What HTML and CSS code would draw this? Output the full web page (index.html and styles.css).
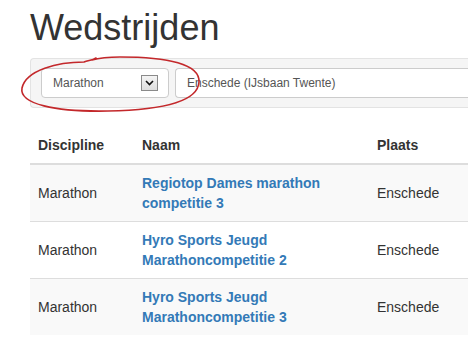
FILE: index.html
```html
<!DOCTYPE html>
<html lang="nl">
<head>
<meta charset="UTF-8" />
<meta name="viewport" content="width=device-width, initial-scale=1.0"/>
<title>Wedstrijden</title>
<link rel="stylesheet" href="styles.css">
</head>
<body>
<div class="page">
  <h1 class="title">Wedstrijden</h1>

  <div class="filters">
    <div class="select select-discipline">
      <span>Marathon</span>
      <span class="select-arrow">
        <svg width="9" height="6" viewBox="0 0 9 6"><path d="M1 1 L4.5 4.5 L8 1" fill="none" stroke="#111" stroke-width="1.6"/></svg>
      </span>
    </div>
    <div class="select select-plaats">
      <span>Enschede (IJsbaan Twente)</span>
    </div>
  </div>

  <table class="races">
    <thead>
      <tr>
        <th class="col-discipline">Discipline</th>
        <th class="col-naam">Naam</th>
        <th>Plaats</th>
      </tr>
    </thead>
    <tbody>
      <tr>
        <td>Marathon</td>
        <td><a href="#">Regiotop Dames marathon competitie 3</a></td>
        <td>Enschede</td>
      </tr>
      <tr>
        <td>Marathon</td>
        <td><a href="#">Hyro Sports Jeugd Marathoncompetitie 2</a></td>
        <td>Enschede</td>
      </tr>
      <tr>
        <td>Marathon</td>
        <td><a href="#">Hyro Sports Jeugd Marathoncompetitie 3</a></td>
        <td>Enschede</td>
      </tr>
    </tbody>
  </table>
</div>

<!-- hand drawn marker round the discipline filter -->
<svg class="marker" width="468" height="350" viewBox="0 0 468 350">
  <path d="M96 58 C92 61, 88 60, 84 62 C58 62, 26 70, 22 88 C19 104, 55 112, 108 111 C160 110, 198 102, 199 82 C200 64, 168 57, 120 57 C108 57, 99 58, 92 60"
        fill="none" stroke="#c3282b" stroke-width="1.6" stroke-linecap="round"/>
</svg>
</body>
</html>
```

FILE: styles.css
```css
body {
  margin: 0;
  background-color: #fff;
  color: #333;
  font-family: 'Liberation Sans', Arial, sans-serif;
  font-size: 14px;
  line-height: 20px;
}

.page {
  padding: 8px 0 0 30px;
}

.title {
  margin: 0 0 10px;
  font-size: 36px;
  font-weight: normal;
  line-height: 40px;
  color: #333;
}

.filters {
  display: flex;
  gap: 6px;
  padding: 9px 0 9px 10px;
  background-color: #f5f5f5;
  border: 1px solid #e3e3e3;
  border-right: 0;
  border-radius: 4px 0 0 4px;
  margin-bottom: 19px;
}

.select {
  display: flex;
  align-items: center;
  justify-content: space-between;
  box-sizing: border-box;
  height: 30px;
  padding: 0 10px 0 11px;
  background-color: #fff;
  border: 1px solid #ccc;
  border-radius: 4px;
  font-size: 12px;
  color: #555;
}

.select-discipline {
  width: 128px;
}

.select-plaats {
  flex: 1;
  border-right: 0;
  border-radius: 4px 0 0 4px;
}

.select-arrow {
  display: flex;
  align-items: center;
  justify-content: center;
  box-sizing: border-box;
  width: 17px;
  height: 16px;
  border: 1px solid #8a8a8a;
  background: linear-gradient(#f4f4f4, #dedede);
}

.races {
  border-collapse: collapse;
  width: 100%;
}

.races th,
.races td {
  padding: 8px;
  text-align: left;
  vertical-align: middle;
}

.races th {
  font-weight: bold;
  border-bottom: 2px solid #ddd;
}

.races td {
  border-top: 1px solid #ddd;
}

.races tbody tr:nth-child(odd) {
  background-color: #f9f9f9;
}

.col-discipline {
  width: 88px;
}

.col-naam {
  width: 219px;
}

.races a {
  color: #337ab7;
  font-weight: bold;
  text-decoration: none;
}

.marker {
  position: absolute;
  left: 0;
  top: 0;
  pointer-events: none;
}
```
